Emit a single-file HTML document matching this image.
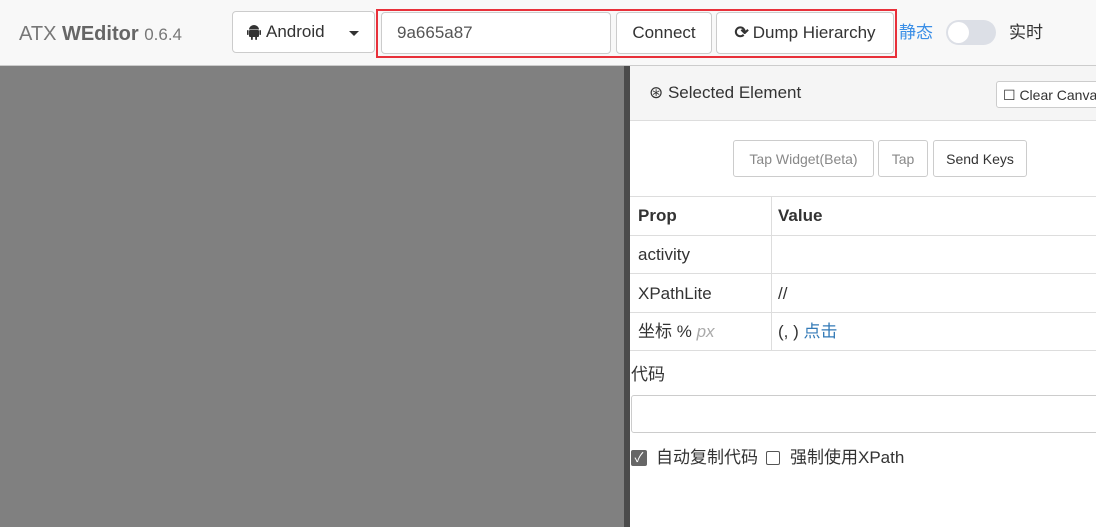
<!DOCTYPE html>
<html><head><meta charset="utf-8"><style>
*{box-sizing:border-box;margin:0;padding:0}
body{width:1096px;height:527px;overflow:hidden;font-family:"Liberation Sans","Noto Sans CJK SC",sans-serif;font-size:16px;color:#333;background:#fff;position:relative;line-height:20px}
.hdr{position:absolute;left:0;top:0;width:1096px;height:66px;background:#f8f8f8;border-bottom:1px solid #ccc}
.abs{position:absolute}
.btn{position:absolute;border:1px solid #ccc;border-radius:4px;background:#fff;display:flex;align-items:center;justify-content:center;font-size:17px;color:#333}
.left{position:absolute;left:0;top:66px;width:624px;height:461px;background:#808080}
.div{position:absolute;left:624px;top:66px;width:6px;height:461px;background:#4b4b4b}
.panel{position:absolute;left:630px;top:66px;width:466px;height:461px;background:#fff}
.td{position:absolute;font-size:17px;line-height:20px}
.hl{position:absolute;left:0;width:466px;height:1px;background:#ddd}
.sb{position:absolute;border:1px solid #ccc;border-radius:3px;display:flex;align-items:center;justify-content:center;font-size:14px;background:#fff}
</style></head><body>
<div class="hdr">
 <div class="abs" style="left:19px;top:24px;font-size:20px;color:#777">ATX <b style="color:#666">WEditor</b> <span style="font-size:17px">0.6.4</span></div>
 <div class="btn" style="left:232px;top:11px;width:143px;height:42px;justify-content:flex-start;padding-left:14px">
  <svg width="14" height="16" viewBox="0 0 14 16" style="margin-right:5px"><rect x="2" y="6" width="10" height="7" rx="1" fill="#333"/><path d="M2 5.5a5 4.5 0 0 1 10 0z" fill="#333"/><rect x="0" y="6" width="1.6" height="5" rx=".8" fill="#333"/><rect x="12.4" y="6" width="1.6" height="5" rx=".8" fill="#333"/><rect x="4" y="12" width="1.8" height="4" rx=".9" fill="#333"/><rect x="8.2" y="12" width="1.8" height="4" rx=".9" fill="#333"/></svg>Android
  <span style="position:absolute;right:15px;top:19px;border-left:5px solid transparent;border-right:5px solid transparent;border-top:5px solid #333"></span></div>
 <div class="abs" style="left:376px;top:9px;width:521px;height:49px;border:2px solid #e8303a"></div>
 <div class="btn" style="left:381px;top:12px;width:230px;height:42px;justify-content:flex-start;padding-left:15px;color:#555">9a665a87</div>
 <div class="btn" style="left:616px;top:12px;width:96px;height:42px">Connect</div>
 <div class="btn" style="left:716px;top:12px;width:178px;height:42px"><span style="font-size:17px;margin-right:4px;font-weight:bold">⟳</span>Dump Hierarchy</div>
 <div class="abs" style="left:899px;top:23px;font-size:17px;color:#3a8ee6">静态</div>
 <div class="abs" style="left:946px;top:20px;width:50px;height:25px;border-radius:13px;background:#dcdfe6"><div style="position:absolute;left:2px;top:2px;width:21px;height:21px;border-radius:50%;background:#fff"></div></div>
 <div class="abs" style="left:1009px;top:23px;font-size:17px;color:#333">实时</div>
</div>
<div class="left"></div><div class="div"></div>
<div class="panel">
 <div class="abs" style="left:0;top:0;width:466px;height:55px;background:#f5f5f5;border-bottom:1px solid #ddd"></div>
 <div class="abs" style="left:19px;top:17px;font-size:17px">⊛ Selected Element</div>
 <div class="sb" style="left:366px;top:15px;width:110px;height:27px;justify-content:flex-start;padding-left:6px">☐ Clear Canvas</div>
 <div class="sb" style="left:103px;top:74px;width:141px;height:37px;color:#888">Tap Widget(Beta)</div>
 <div class="sb" style="left:248px;top:74px;width:50px;height:37px;color:#888">Tap</div>
 <div class="sb" style="left:303px;top:74px;width:94px;height:37px;color:#333">Send Keys</div>
 <div class="hl" style="top:130px"></div>
 <div class="hl" style="top:169px"></div>
 <div class="hl" style="top:207px"></div>
 <div class="hl" style="top:246px"></div>
 <div class="hl" style="top:284px"></div>
 <div class="abs" style="left:141px;top:130px;width:1px;height:154px;background:#ddd"></div>
 <div class="td" style="left:8px;top:140px;font-weight:bold">Prop</div>
 <div class="td" style="left:148px;top:140px;font-weight:bold">Value</div>
 <div class="td" style="left:8px;top:179px">activity</div>
 <div class="td" style="left:8px;top:218px">XPathLite</div>
 <div class="td" style="left:148px;top:218px">//</div>
 <div class="td" style="left:8px;top:256px">坐标 % <i style="color:#aaa">px</i></div>
 <div class="td" style="left:148px;top:256px">(, ) <span style="color:#337ab7">点击</span></div>
 <div class="td" style="left:1px;top:299px">代码</div>
 <div class="abs" style="left:1px;top:329px;width:470px;height:38px;border:1px solid #ccc;border-radius:3px"></div>
 <div class="abs" style="left:1px;top:384px;width:16px;height:16px;background:#666;border-radius:2px;color:#fff;font-size:13px;text-align:center;line-height:16px">✓</div>
 <div class="td" style="left:26px;top:382px">自动复制代码</div>
 <div class="abs" style="left:136px;top:385px;width:14px;height:14px;border:1px solid #555;border-radius:2px"></div>
 <div class="td" style="left:160px;top:382px">强制使用XPath</div>
</div>
</body></html>
